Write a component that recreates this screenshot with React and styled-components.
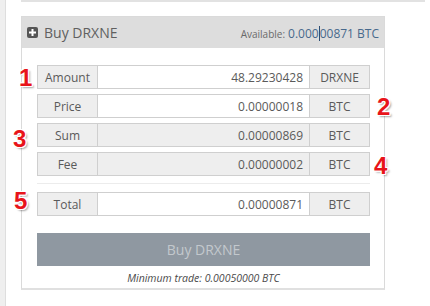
import React from "react";
import styled, { createGlobalStyle } from "styled-components";

const Global = createGlobalStyle`
  html, body { margin: 0; padding: 0; background: #fff; }
  body { font-family: "Open Sans", "Liberation Sans", sans-serif; width: 430px; height: 306px; overflow: hidden; }
`;

const Page = styled.div`
  display: flex;
  width: 430px;
  height: 306px;
  position: relative;
`;

const Sidebar = styled.div`
  width: 5px;
  background: #efefef;
  border-right: 1px solid #dedede;
  flex-shrink: 0;
`;

const Main = styled.div`
  flex: 1;
  padding-left: 15px;
  display: flex;
  flex-direction: column;
`;

const PrevPanelEdge = styled.div`
  height: 2px;
  width: 404px;
  background: #e2e2e2;
`;

const Panel = styled.div`
  margin-top: 14px;
  width: 362px;
  border: 1px solid #dadada;
  border-bottom: 2px solid #e0e0e0;
`;

const Header = styled.div`
  height: 31px;
  background: #dddddd;
  display: flex;
  align-items: center;
  padding: 0 5px;
  gap: 6px;
`;

const PlusIcon = styled.span`
  width: 11px;
  height: 11px;
  border-radius: 2px;
  background: #555;
  display: inline-flex;
  align-items: center;
  justify-content: center;
  flex-shrink: 0;
`;

const Title = styled.span`
  font-size: 14px;
  color: #606060;
  flex: 1;
`;

const Available = styled.span`
  font-size: 10px;
  color: #6a6a6a;
  margin-top: 2px;
`;

const AvailValue = styled.span`
  font-size: 12px;
  color: #48698c;
  margin-left: 3px;
`;

const Caret = styled.span`
  display: inline-block;
  width: 1px;
  height: 15px;
  background: #2d4f75;
  vertical-align: -3px;
`;

const Body = styled.div`
  padding: 17px 15px 3px 15px;
  display: flex;
  flex-direction: column;
`;

const Rows = styled.div`
  display: flex;
  flex-direction: column;
  gap: 5px;
`;

const Row = styled.div`
  display: flex;
  height: 24px;
  width: 333px;
`;

const Cell = styled.div`
  box-sizing: border-box;
  height: 24px;
  border: 1px solid #cfcfcf;
  background: ${(p) => (p.$white ? "#fff" : "#eeeeee")};
  display: flex;
  align-items: center;
  font-size: 12px;
  color: #5a5a5a;
`;

const Label = styled(Cell)`
  width: 61px;
  justify-content: center;
`;

const Value = styled(Cell)`
  width: 213px;
  margin-left: -1px;
  justify-content: flex-end;
  padding-right: 6px;
`;

const Unit = styled(Cell)`
  width: 61px;
  margin-left: -1px;
  justify-content: center;
`;

const Divider = styled.div`
  height: 1px;
  background: #ececec;
  margin: 7px 0 8px;
  width: 333px;
`;

const BuyButton = styled.button`
  margin-top: 17px;
  width: 333px;
  height: 33px;
  border: none;
  background: #8f98a1;
  color: #c3c8cd;
  font-family: "Open Sans", "Liberation Sans", sans-serif;
  font-size: 14px;
  padding: 0;
`;

const MinTrade = styled.div`
  font-size: 10.5px;
  font-style: italic;
  color: #4a4a4a;
  text-align: center;
  line-height: 13px;
  margin-top: 6px;
  width: 333px;
`;

const Marker = styled.span`
  position: absolute;
  left: ${(p) => p.$x}px;
  top: ${(p) => p.$y}px;
  font-family: "Liberation Sans", Arial, sans-serif;
  font-weight: bold;
  font-size: 24px;
  line-height: 24px;
  color: #e8141a;
  text-shadow:
    1px 0 0 #fff, -1px 0 0 #fff, 0 1px 0 #fff, 0 -1px 0 #fff,
    1px 1px 0 #fff, -1px -1px 0 #fff, 1px -1px 0 #fff, -1px 1px 0 #fff,
    2px 2px 2px rgba(0, 0, 0, 0.35);
`;

const rows = [
  { label: "Amount", value: "48.29230428", unit: "DRXNE", white: true },
  { label: "Price", value: "0.00000018", unit: "BTC", white: true },
  { label: "Sum", value: "0.00000869", unit: "BTC", white: false },
  { label: "Fee", value: "0.00000002", unit: "BTC", white: false },
];

const markers = [
  { n: "1", x: 19, y: 66 },
  { n: "2", x: 377, y: 95 },
  { n: "3", x: 13, y: 127 },
  { n: "4", x: 374, y: 154 },
  { n: "5", x: 14, y: 189 },
];

export default function App() {
  return (
    <>
      <Global />
      <Page>
        <Sidebar />
        <Main>
          <PrevPanelEdge />
          <Panel>
            <Header>
              <PlusIcon>
                <svg width="7" height="7" viewBox="0 0 7 7">
                  <rect x="2.5" y="0" width="2" height="7" fill="#fff" />
                  <rect x="0" y="2.5" width="7" height="2" fill="#fff" />
                </svg>
              </PlusIcon>
              <Title>Buy DRXNE</Title>
              <Available>
                Available:
                <AvailValue>
                  0.000<Caret />00871 BTC
                </AvailValue>
              </Available>
            </Header>
            <Body>
              <Rows>
                {rows.map((r) => (
                  <Row key={r.label}>
                    <Label>{r.label}</Label>
                    <Value $white={r.white}>{r.value}</Value>
                    <Unit>{r.unit}</Unit>
                  </Row>
                ))}
              </Rows>
              <Divider />
              <Row>
                <Label>Total</Label>
                <Value $white>0.00000871</Value>
                <Unit>BTC</Unit>
              </Row>
              <BuyButton>Buy DRXNE</BuyButton>
              <MinTrade>Minimum trade: 0.00050000 BTC</MinTrade>
            </Body>
          </Panel>
        </Main>
        {markers.map((m) => (
          <Marker key={m.n} $x={m.x} $y={m.y}>
            {m.n}
          </Marker>
        ))}
      </Page>
    </>
  );
}
